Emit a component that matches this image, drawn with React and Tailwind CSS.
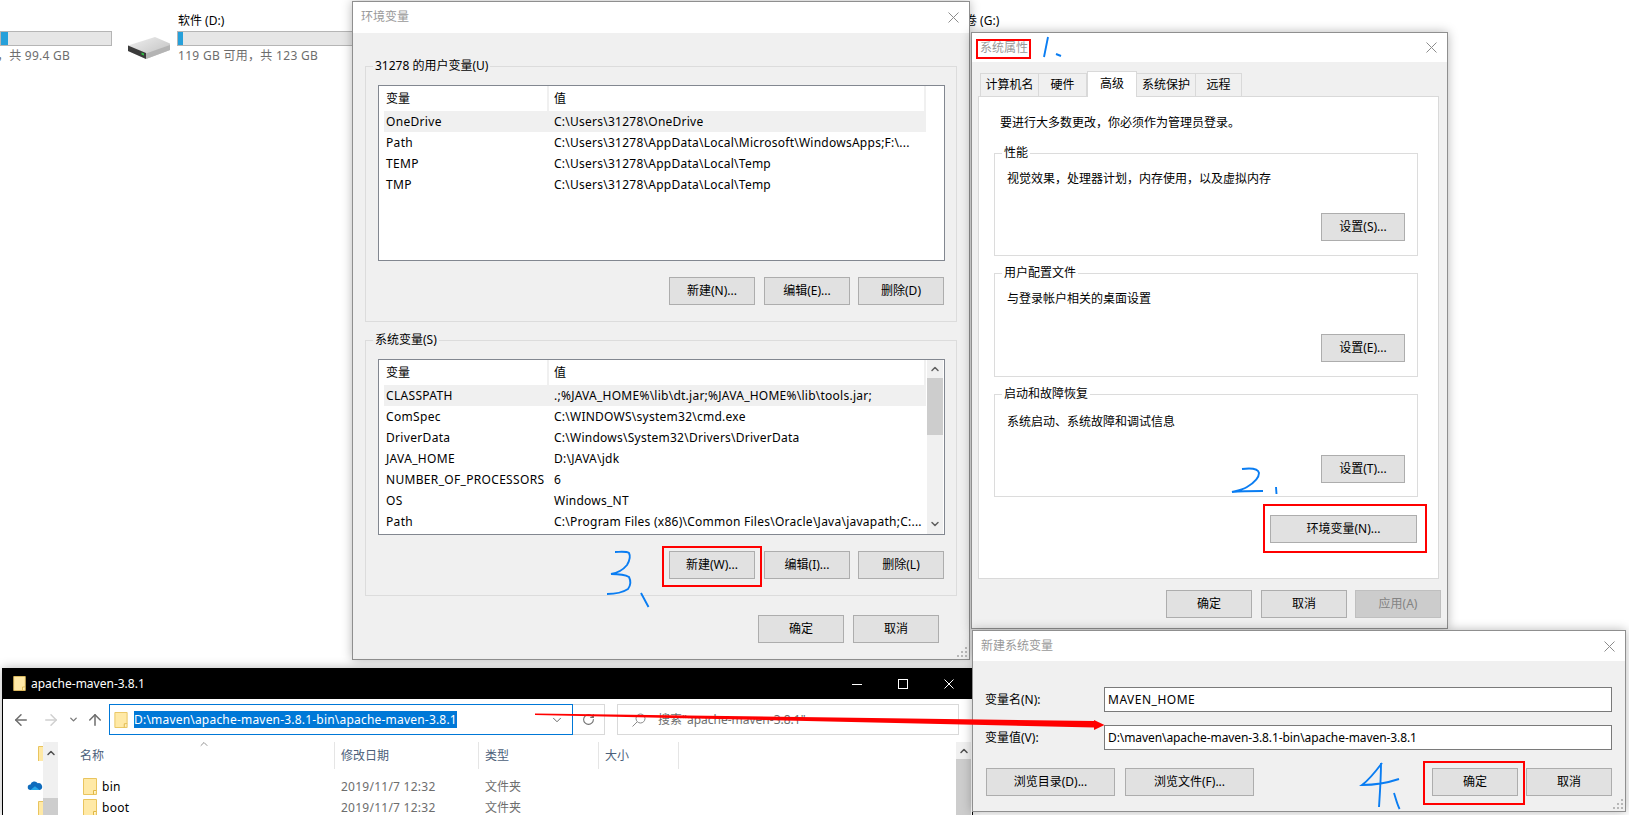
import { ArrowLeft, ArrowRight, ArrowUp, ChevronDown, ChevronUp, RotateCw } from 'lucide-react';

const userVars = [
  ['OneDrive', 'C:\\Users\\31278\\OneDrive'],
  ['Path', 'C:\\Users\\31278\\AppData\\Local\\Microsoft\\WindowsApps;F:\\...'],
  ['TEMP', 'C:\\Users\\31278\\AppData\\Local\\Temp'],
  ['TMP', 'C:\\Users\\31278\\AppData\\Local\\Temp'],
];

const systemVars = [
  ['CLASSPATH', '.;%JAVA_HOME%\\lib\\dt.jar;%JAVA_HOME%\\lib\\tools.jar;'],
  ['ComSpec', 'C:\\WINDOWS\\system32\\cmd.exe'],
  ['DriverData', 'C:\\Windows\\System32\\Drivers\\DriverData'],
  ['JAVA_HOME', 'D:\\JAVA\\jdk'],
  ['NUMBER_OF_PROCESSORS', '6'],
  ['OS', 'Windows_NT'],
  ['Path', 'C:\\Program Files (x86)\\Common Files\\Oracle\\Java\\javapath;C:...'],
];

function Button({ children, className = '', disabled = false }) {
  return (
    <div
      className={`flex h-[28px] shrink-0 items-center justify-center border text-[12px] ${
        disabled ? 'border-[#bfbfbf] bg-[#cccccc] text-[#838383]' : 'border-[#adadad] bg-[#e1e1e1] text-black'
      } ${className}`}
    >
      {children}
    </div>
  );
}

function RedBox({ className }) {
  return <div className={`pointer-events-none absolute border-2 border-[#ff0000] ${className}`} />;
}

function CloseIcon() {
  return (
    <svg width="11" height="11" viewBox="0 0 11 11" className="shrink-0">
      <path d="M0.5 0.5L10.5 10.5M10.5 0.5L0.5 10.5" stroke="#8c8c8c" strokeWidth="1" fill="none" />
    </svg>
  );
}

function TitleBar({ title, className = '' }) {
  return (
    <div className={`flex items-center justify-between bg-white pl-[8px] pr-[10px] text-[12px] text-[#999999] ${className}`}>
      <span>{title}</span>
      <CloseIcon />
    </div>
  );
}

function Grip() {
  return (
    <svg width="11" height="11" viewBox="0 0 11 11" className="absolute bottom-[1px] right-[1px]">
      <g fill="#b8b8b8">
        <rect x="8" y="0" width="2" height="2" />
        <rect x="4" y="4" width="2" height="2" />
        <rect x="8" y="4" width="2" height="2" />
        <rect x="0" y="8" width="2" height="2" />
        <rect x="4" y="8" width="2" height="2" />
        <rect x="8" y="8" width="2" height="2" />
      </g>
    </svg>
  );
}

function Folder({ className = 'h-[17px] w-[14px]' }) {
  return (
    <svg viewBox="0 0 14 17" className={`shrink-0 ${className}`}>
      <path d="M0.5 0.5H13.5V16.5H0.5Z" fill="#ffe9a6" stroke="#e9c45e" />
      <path d="M10.5 16.5V12.5H13.5" fill="#fff4cf" stroke="#e0b744" />
    </svg>
  );
}

function GroupBox({ label, className = '', children }) {
  return (
    <div className={`relative border border-[#dcdcdc] ${className}`}>
      <span className="absolute left-[7px] top-[-9px] bg-inherit px-[2px] text-[12px] leading-[16px] text-black">{label}</span>
      {children}
    </div>
  );
}

function VarList({ rows, scrollbar }) {
  return (
    <div className="flex h-[176px] w-[567px] border border-[#828790] bg-white pl-[5px] text-[12px]">
      <div className="w-[542px] shrink-0">
        <div className="flex h-[25px] items-center text-black">
          <div className="flex h-full w-[165px] items-center border-r-2 border-[#f0f0f0] pl-[2px]">变量</div>
          <div className="flex h-full flex-1 items-center border-r-2 border-[#f0f0f0] pl-[5px]">值</div>
        </div>
        {rows.map(([name, value], i) => (
          <div key={name} className={`flex h-[21px] items-center text-black ${i === 0 ? 'bg-[#f0f0f0]' : ''}`}>
            <div className="w-[163px] whitespace-nowrap pl-[2px] tracking-[0.32px]">{name}</div>
            <div className="whitespace-nowrap pl-[7px] tracking-[0.25px]">{value}</div>
          </div>
        ))}
      </div>
      {scrollbar && (
        <div className="ml-[1px] flex w-[16px] flex-col bg-[#f0f0f0]">
          <div className="flex h-[18px] items-center justify-center">
            <ChevronUp size={12} strokeWidth={3} color="#606060" />
          </div>
          <div className="h-[57px] bg-[#cdcdcd]" />
          <div className="mb-[2px] mt-auto flex h-[16px] items-center justify-center">
            <ChevronDown size={12} strokeWidth={3} color="#606060" />
          </div>
        </div>
      )}
    </div>
  );
}

function VarGroup({ label, rows, scrollbar, buttons, className = '' }) {
  return (
    <GroupBox label={label} className={`h-[256px] w-[592px] bg-[#f0f0f0] pl-[12px] pt-[18px] ${className}`}>
      <VarList rows={rows} scrollbar={scrollbar} />
      <div className="mt-[16px] flex justify-end gap-[8px] pr-[12px]">
        {buttons.map((b, i) => (
          <Button key={b} className={`w-[86px] ${i === 0 ? 'mr-[1px]' : ''}`}>
            {b}
          </Button>
        ))}
      </div>
    </GroupBox>
  );
}

function EnvDialog() {
  return (
    <div className="absolute left-[352px] top-[1px] z-10 h-[659px] w-[618px] border border-[#8f8f8f] bg-[#f0f0f0] shadow-[0_0_10px_rgba(0,0,0,0.28)]">
      <TitleBar title="环境变量" className="h-[31px] pb-[1px]" />
      <div className="px-[12px] pt-[33px]">
        <VarGroup label="31278 的用户变量(U)" rows={userVars} buttons={['新建(N)...', '编辑(E)...', '删除(D)']} />
        <VarGroup
          label="系统变量(S)"
          rows={systemVars}
          scrollbar
          buttons={['新建(W)...', '编辑(I)...', '删除(L)']}
          className="mt-[18px]"
        />
        <div className="mt-[19px] flex justify-end gap-[9px] pr-[18px]">
          <Button className="w-[86px]">确定</Button>
          <Button className="w-[86px]">取消</Button>
        </div>
      </div>
      <Grip />
    </div>
  );
}

const tabs = [
  ['计算机名', 'w-[59px]'],
  ['硬件', 'w-[48px]'],
  ['高级', 'w-[50px]'],
  ['系统保护', 'w-[59px]'],
  ['远程', 'w-[46px]'],
];

function SettingsGroup({ label, text, button, className = '', buttonClass = 'mb-[14px]' }) {
  return (
    <GroupBox label={label} className={`flex w-[424px] flex-col bg-white pl-[12px] pr-[12px] pt-[17px] ${className}`}>
      <div className="text-[12px] leading-[16px] text-black">{text}</div>
      <Button className={`ml-auto mt-auto w-[84px] ${buttonClass}`}>{button}</Button>
    </GroupBox>
  );
}

function SystemDialog() {
  return (
    <div className="absolute left-[971px] top-[32px] z-20 h-[597px] w-[477px] border border-[#8f8f8f] bg-[#f0f0f0] shadow-[0_0_10px_rgba(0,0,0,0.28)]">
      <TitleBar title="系统属性" className="h-[29px] pl-[7px] pr-[9px]" />
      <div className="pl-[6px] pt-[9px]">
        <div className="flex h-[25px] items-end pl-[2px] text-[12px] text-black">
          {tabs.map(([tab, w]) =>
            tab === '高级' ? (
              <div key={tab} className={`z-10 -mb-px flex h-[26px] items-start justify-center border border-b-0 border-[#d9d9d9] bg-white pt-[3px] ${w}`}>
                {tab}
              </div>
            ) : (
              <div key={tab} className={`flex h-[23px] items-center justify-center border border-l-0 border-b-0 border-[#d9d9d9] first:border-l ${w}`}>
                {tab}
              </div>
            ),
          )}
        </div>
        <div className="h-[483px] w-[461px] border border-[#d9d9d9] bg-white pl-[15px] pt-[18px]">
          <div className="pl-[6px] text-[12px] leading-[16px] text-black">要进行大多数更改，你必须作为管理员登录。</div>
          <SettingsGroup
            label="性能"
            text="视觉效果，处理器计划，内存使用，以及虚拟内存"
            button="设置(S)..."
            className="mt-[22px] h-[103px]"
          />
          <SettingsGroup label="用户配置文件" text="与登录帐户相关的桌面设置" button="设置(E)..." className="mt-[17px] h-[104px]" />
          <SettingsGroup
            label="启动和故障恢复"
            text="系统启动、系统故障和调试信息"
            button="设置(T)..."
            className="mt-[17px] h-[103px] pt-[19px]"
            buttonClass="mb-[13px]"
          />
          <Button className="ml-[276px] mt-[18px] w-[147px]">环境变量(N)...</Button>
        </div>
        <div className="mt-[11px] flex justify-end gap-[8px] pr-[6px]">
          <Button className="mr-[1px] w-[86px]">确定</Button>
          <Button className="w-[86px]">取消</Button>
          <Button disabled className="w-[86px]">
            应用(A)
          </Button>
        </div>
      </div>
    </div>
  );
}

function NewVarDialog() {
  return (
    <div className="absolute left-[972px] top-[630px] z-40 h-[182px] w-[654px] border border-[#8f8f8f] bg-[#f0f0f0] shadow-[0_0_10px_rgba(0,0,0,0.28)]">
      <TitleBar title="新建系统变量" className="h-[30px] pr-[10px]" />
      <div className="pl-[12px] pr-[13px] pt-[26px] text-[12px] text-black">
        <div className="flex h-[25px] items-center">
          <div className="w-[119px]">变量名(N):</div>
          <div className="flex h-full w-[508px] items-center border border-[#7a7a7a] bg-white pl-[3px] tracking-[0.5px]">MAVEN_HOME</div>
        </div>
        <div className="mt-[13px] flex h-[25px] items-center">
          <div className="w-[119px]">变量值(V):</div>
          <div className="flex h-full w-[508px] items-center border border-[#7a7a7a] bg-white pl-[3px] tracking-[-0.08px]">
            D:\maven\apache-maven-3.8.1-bin\apache-maven-3.8.1
          </div>
        </div>
        <div className="mt-[18px] flex gap-[10px] pl-[1px]">
          <Button className="w-[129px]">浏览目录(D)...</Button>
          <Button className="w-[129px]">浏览文件(F)...</Button>
          <Button className="ml-auto w-[86px]">确定</Button>
          <Button className="-ml-[2px] w-[86px]">取消</Button>
        </div>
      </div>
      <Grip />
    </div>
  );
}

function FileRow({ name }) {
  return (
    <div className="flex h-[21px] items-center text-[12px]">
      <div className="flex w-[277px] items-center gap-[5px] pl-[25px] text-black">
        <Folder />
        <span className="tracking-[0.3px]">{name}</span>
      </div>
      <div className="w-[144px] pl-[6px] tracking-[0.25px] text-[#6d6d6d]">2019/11/7 12:32</div>
      <div className="pl-[6px] text-[#6d6d6d]">文件夹</div>
    </div>
  );
}

function Explorer() {
  return (
    <div className="absolute left-[2px] top-[668px] z-30 h-[147px] w-[971px] overflow-hidden border-x border-black bg-white shadow-[0_0_10px_rgba(0,0,0,0.28)]">
      <div className="flex h-[31px] items-center bg-black pl-[10px] text-[12px] text-white">
        <Folder className="h-[15px] w-[13px]" />
        <span className="ml-[5px]">apache-maven-3.8.1</span>
        <div className="ml-auto flex h-full">
          <div className="flex w-[46px] items-center justify-center">
            <svg width="10" height="10" viewBox="0 0 10 10">
              <path d="M0 5.5H10" stroke="#fff" />
            </svg>
          </div>
          <div className="flex w-[46px] items-center justify-center">
            <svg width="10" height="10" viewBox="0 0 10 10">
              <rect x="0.5" y="0.5" width="9" height="9" stroke="#fff" fill="none" />
            </svg>
          </div>
          <div className="flex w-[46px] items-center justify-center">
            <svg width="10" height="10" viewBox="0 0 10 10">
              <path d="M0.5 0.5L9.5 9.5M9.5 0.5L0.5 9.5" stroke="#fff" fill="none" />
            </svg>
          </div>
        </div>
      </div>

      <div className="flex h-[43px] items-start pl-[9px] pt-[5px]">
        <div className="flex h-[31px] items-center">
          <ArrowLeft size={18} color="#6d6d6d" strokeWidth={2} />
          <ArrowRight size={18} color="#d0d0d0" strokeWidth={2} className="ml-[12px]" />
          <ChevronDown size={11} color="#7a7a7a" strokeWidth={3} className="ml-[8px]" />
          <ArrowUp size={18} color="#6d6d6d" strokeWidth={2} className="ml-[7px]" />
        </div>
        <div className="ml-[5px] flex h-[31px] w-[464px] items-center border border-[#0078d7] pl-[4px] text-[12px]">
          <Folder className="h-[16px] w-[14px]" />
          <span className="ml-[6px] bg-[#0078d7] leading-[17px] tracking-[0.2px] text-white">D:\maven\apache-maven-3.8.1-bin\apache-maven-3.8.1</span>
          <ChevronDown size={14} color="#555555" strokeWidth={1.5} className="ml-auto mr-[8px]" />
        </div>
        <div className="flex h-[31px] w-[32px] items-center justify-center border border-l-0 border-[#d9d9d9]">
          <RotateCw size={13} color="#707070" strokeWidth={2} />
        </div>
        <div className="ml-[12px] flex h-[31px] w-[342px] items-center border border-[#d9d9d9] pl-[14px] text-[12px] text-[#6d6d6d]">
          <svg width="14" height="14" viewBox="0 0 14 14" className="shrink-0">
            <circle cx="8.5" cy="5.5" r="4.5" stroke="#8a8a8a" fill="none" />
            <path d="M5 9L0.5 13.5" stroke="#8a8a8a" />
          </svg>
          <span className="ml-[12px]">搜索"apache-maven-3.8.1"</span>
        </div>
      </div>

      <div className="flex h-[73px]">
        <div className="flex w-[40px] shrink-0 flex-col items-end overflow-hidden pt-[4px]">
          <div className="h-[16px] w-[5px] overflow-hidden">
            <Folder />
          </div>
          <svg width="16" height="11" viewBox="0 0 16 11" className="mr-0 mt-[19px]">
            <path d="M3 11A3 3 0 0 1 3 5A4.5 4.5 0 0 1 11 3.5A3.5 3.5 0 0 1 13 11Z" fill="#0f6cbd" />
            <path d="M3 11L8 7L13 11Z" fill="#28a8ea" />
          </svg>
          <div className="mt-[11px] h-[16px] w-[5px] overflow-hidden">
            <Folder />
          </div>
        </div>
        <div className="flex w-[15px] shrink-0 flex-col bg-[#f0f0f0]">
          <div className="flex h-[22px] items-center justify-center">
            <ChevronUp size={12} strokeWidth={3} color="#505050" />
          </div>
          <div className="mt-[34px] flex-1 bg-[#cdcdcd]" />
        </div>
        <div className="relative min-w-0 flex-1 overflow-hidden">
          <div className="flex h-[27px] text-[12px] text-[#4c607a]">
            <div className="flex w-[277px] items-center border-r border-[#e5e5e5] pl-[22px]">名称</div>
            <div className="flex w-[144px] items-center border-r border-[#e5e5e5] pl-[6px]">修改日期</div>
            <div className="flex w-[120px] items-center border-r border-[#e5e5e5] pl-[6px]">类型</div>
            <div className="flex w-[80px] items-center border-r border-[#e5e5e5] pl-[6px]">大小</div>
          </div>
          <ChevronUp size={12} strokeWidth={1.5} color="#707070" className="absolute left-[140px] top-[-4px]" />
          <div className="pt-[7px]">
            <FileRow name="bin" />
            <FileRow name="boot" />
          </div>
        </div>
        <div className="flex w-[15px] shrink-0 flex-col bg-[#cdcdcd]">
          <div className="flex h-[17px] items-center justify-center bg-[#f0f0f0]">
            <ChevronUp size={12} strokeWidth={3} color="#505050" />
          </div>
        </div>
        <div className="w-px shrink-0" />
      </div>
    </div>
  );
}

function DriveIcon() {
  return (
    <svg viewBox="0 0 42 22" className="absolute left-[128px] top-[37px] h-[22px] w-[42px]">
      <defs>
        <linearGradient id="drive-top" x1="0" y1="0" x2="1" y2="1">
          <stop offset="0" stopColor="#f0f0f0" />
          <stop offset="1" stopColor="#bdbdbd" />
        </linearGradient>
      </defs>
      <path d="M0 8.5L27 0L42 6.5L42 13L18 22L0 14Z" fill="url(#drive-top)" />
      <path d="M18 16.5L42 8V13L18 22Z" fill="#b4b4b4" />
      <path d="M0 8.5L18 16V22L0 14Z" fill="#3b3b3b" />
      <path d="M13.5 15.5L16 16.5V18.5L13.5 17.5Z" fill="#2fc143" />
    </svg>
  );
}

function Desktop() {
  return (
    <>
      <div className="absolute left-0 top-[31px] flex h-[15px] w-[112px] border border-[#b5b5b5] bg-[#e6e6e6]">
        <div className="h-full w-[7px] bg-[#26a0da]" />
      </div>
      <div className="absolute left-[-3px] top-[47px] text-[12px] leading-[17px] tracking-[0.25px] text-[#6d6d6d]">，共 99.4 GB</div>
      <DriveIcon />
      <div className="absolute left-[178px] top-[12px] text-[12px] leading-[17px] text-black">软件 (D:)</div>
      <div className="absolute left-[177px] top-[31px] flex h-[15px] w-[180px] border border-[#b5b5b5] bg-[#e6e6e6]">
        <div className="h-full w-[5px] bg-[#26a0da]" />
      </div>
      <div className="absolute left-[178px] top-[47px] text-[12px] leading-[17px] tracking-[0.3px] text-[#6d6d6d]">119 GB 可用，共 123 GB</div>
      <div className="absolute left-[941px] top-[12px] text-[12px] leading-[17px] text-black">新加卷 (G:)</div>
    </>
  );
}

function Annotations() {
  const ink = 'fill-none stroke-[#0a7df2] stroke-[1.9]';
  return (
    <svg viewBox="0 0 1629 815" className="pointer-events-none absolute left-0 top-0 z-50 h-[815px] w-[1629px]">
      <path className={ink} d="M1048 37L1044 57M1056 54L1061 56" />
      <path
        className={ink}
        d="M1242 469C1250 468 1258 468 1259 473C1259 479 1252 484 1247 487C1242 490 1236 491 1232 492C1242 491 1253 491 1263 491M1276 487L1276.5 494"
      />
      <path
        className={ink}
        d="M615 552C620 552 626 551 629 553C631 557 630 560 627 565C623 570 617 573 611 574C617 574 624 574 629 577C631 581 631 585 628 589C622 593 614 594 607 594M641 593L648.5 607"
      />
      <path className={ink} d="M1382 763C1376 771 1369 780 1362 785C1374 785 1387 783 1399 779M1381 763C1381 778 1380 792 1379 807M1394 793C1396 799 1397 804 1399.6 809" />
      <path d="M535 713.5L1094 721L1094 720L1104.5 725L1094 730L1094 727.5L535 715Z" fill="#ff0000" />
    </svg>
  );
}

export default function App() {
  return (
    <div className="relative h-[815px] w-[1629px] overflow-hidden bg-white font-['Noto_Sans','Noto_Sans_CJK_SC',sans-serif]">
      <Desktop />
      <EnvDialog />
      <SystemDialog />
      <Explorer />
      <NewVarDialog />
      <RedBox className="left-[662px] top-[546px] z-50 h-[41px] w-[100px]" />
      <RedBox className="left-[976px] top-[39px] z-50 h-[20px] w-[55px]" />
      <RedBox className="left-[1263px] top-[504px] z-50 h-[49px] w-[164px]" />
      <RedBox className="left-[1423px] top-[761px] z-50 h-[44px] w-[102px]" />
      <Annotations />
    </div>
  );
}
